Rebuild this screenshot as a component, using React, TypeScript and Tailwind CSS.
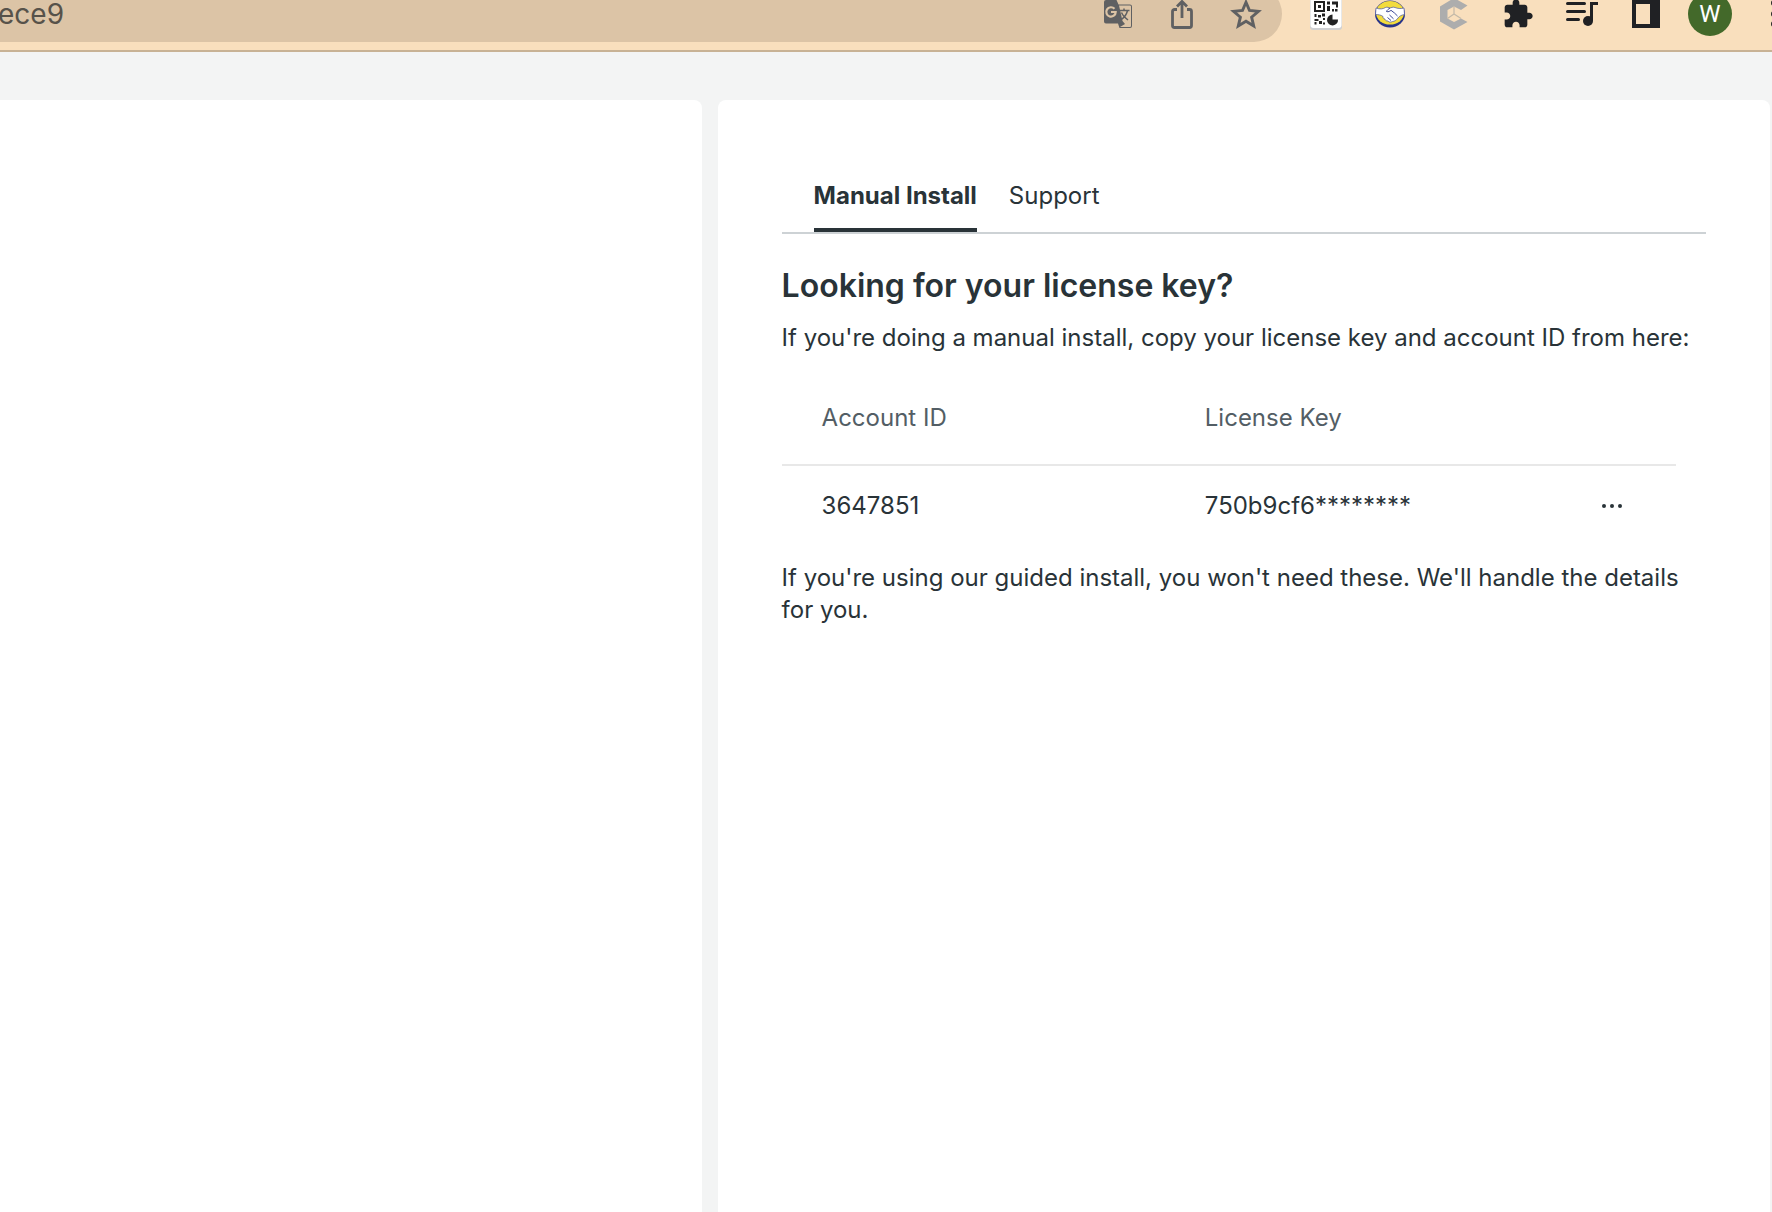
import type { ReactNode } from "react";

function ToolButton({ label, children }: { label: string; children: ReactNode }) {
  return (
    <button type="button" aria-label={label} className="flex h-14 w-16 shrink-0 items-center justify-center">
      {children}
    </button>
  );
}

function Glyph({ children, className }: { children: ReactNode; className?: string }) {
  return (
    <svg viewBox="0 0 32 32" aria-hidden="true" className={className ? "size-8 " + className : "size-8"}>
      {children}
    </svg>
  );
}

function TranslateIcon() {
  return (
    <Glyph>
      <path d="M4 2h10.5l2 4.5H28a2 2 0 0 1 2 2V28a2 2 0 0 1-2 2H17.5L16 25.5H4a2 2 0 0 1-2-2V4a2 2 0 0 1 2-2Z" fill="#5f6062" />
      <path d="M17 7.5h11a1 1 0 0 1 1 1V28a1 1 0 0 1-1 1H18l5-3-2.5-3Z" fill="#dcc4a6" />
      <path d="M12.500 10.800A4.700 4.700 0 1 0 13.700 14H9" fill="none" stroke="#dcc4a6" strokeWidth="2.200" />
      <path d="M17.5 12.5h10M22 10.5v2M25.5 12.5c-.8 4-3.5 7-6 9M19.5 14.5c1 2.5 4 5.500 6.500 7.500" fill="none" stroke="#5f6062" strokeWidth="1.5" />
    </Glyph>
  );
}

function ShareIcon() {
  return (
    <Glyph>
      <g fill="none" stroke="#5f6062" strokeWidth="2.8">
        <path d="M11 11.500H8.500a2 2 0 0 0-2 2V27.500a2 2 0 0 0 2 2h15a2 2 0 0 0 2-2V13.500a2 2 0 0 0-2-2H21" />
        <path d="M16 20V4M11 8.500l5-5 5 5" />
      </g>
    </Glyph>
  );
}

function StarIcon() {
  return (
    <Glyph>
      <path
        d="M16 4.300l3.500 8.200 8.900.8-6.800 5.900 2.100 8.800L16 23.300 8.300 28l2.100-8.800-6.800-5.900 8.900-.8Z"
        fill="none"
        stroke="#5f6062"
        strokeWidth="2.9"
      />
    </Glyph>
  );
}

function QrIcon() {
  return (
    <Glyph>
      <rect x="0" y="0" width="32" height="32" rx="3" fill="#cfd0d2" />
      <rect x="0.500" y="-2" width="31" height="32" rx="3" fill="#fff" />
      <g fill="#222">
        <path d="M4 3h11v11H4ZM6 5v7h7V5Z" fillRule="evenodd" />
        <rect x="8" y="7" width="3" height="3" />
        <path d="M17 3.500h3v3h-3ZM17 8h3v5h-3ZM22 3.500h6v6h-2v-3h-4ZM22 11h2v2.500h-2ZM25 11h2.500v2.500H25Z" />
        <path d="M4.500 16h2v3h-2ZM8 17h3v2.500H8ZM12 15.500h3v3h-3ZM4.500 21h4v2h-4ZM9 23h3v3H9ZM4.500 24h2v2.500h-2ZM13 20h2v2h-2ZM13 24.500h2v2h-2Z" />
        <path d="M22.500 16.500v5h5.500a5.500 5.500 0 1 1-5.500-5Z" />
      </g>
    </Glyph>
  );
}

function HandshakeIcon() {
  return (
    <Glyph>
      <ellipse cx="16" cy="16" rx="15" ry="13.500" fill="#28348a" />
      <ellipse cx="16" cy="14.800" rx="14" ry="11.800" fill="#f3dc3c" />
      <path
        d="M2 10c4 1.500 7 1 9.500-.5 2-1 3.500.5 4.500.5s2.500-1.500 5-.5c2.500 1 5.500 1.500 9 .5l.5 6.500c-3 .5-5 1.500-6.500 3.500-1.500 2-3.500 3.500-5.500 3.500-2 1-3.500.8-4.500-.5-2 .2-3-1-3-2-1.500-.2-2.200-1-2-2.500C7 17 4.500 16.500 1.500 16.500Z"
        fill="#fff"
        stroke="#4a56a0"
        strokeWidth="0.700"
      />
      <path d="M16 10c-1.500 1-3 2-3.500 3.500 2 .8 3.500-.5 4.500-1.200 2.500 1.500 4.500 3.700 6.500 5.700M15.500 17l4 3.800M13.500 19.500l3.500 3" fill="none" stroke="#28348a" strokeWidth="0.900" />
    </Glyph>
  );
}

function HexIcon() {
  return (
    <Glyph>
      <path d="M16 0 29.500 7.500 23 12 16 8.500 9.500 12v8.500l6.500 3.500 7-3.500 6.500 3.500L16 31.500 2 23.500V8.500Z" fill="#adadad" />
      <path d="M16 8.500V16M9.500 20.500 16 16l7 4.500" fill="none" stroke="#c2b8a8" strokeWidth="1.200" />
    </Glyph>
  );
}

function PuzzleIcon() {
  return (
    <svg viewBox="0 0 24 24" aria-hidden="true" className="size-8 fill-[#202124]">
      <path d="M20.5 11H19V7c0-1.100-.9-2-2-2h-4V3.500C13 2.120 11.880 1 10.500 1S8 2.120 8 3.500V5H4c-1.100 0-1.990.9-1.990 2v3.800H3.500c1.490 0 2.700 1.210 2.700 2.700s-1.210 2.700-2.700 2.700H2V20c0 1.100.9 2 2 2h3.800v-1.500c0-1.490 1.210-2.700 2.700-2.700 1.490 0 2.700 1.210 2.700 2.700V22H17c1.100 0 2-.9 2-2v-4h1.500c1.380 0 2.500-1.120 2.500-2.500S21.880 11 20.500 11z" />
    </svg>
  );
}

function PlaylistIcon() {
  return (
    <Glyph>
      <path d="M1.500 5.500h17M1.500 13.500h17M1.500 21.500h11" stroke="#202124" strokeWidth="3" strokeLinecap="round" />
      <circle cx="22" cy="23" r="5" fill="#202124" />
      <path d="M25.500 23V5.500H32" fill="none" stroke="#202124" strokeWidth="3" />
    </Glyph>
  );
}

function SidePanelIcon() {
  return (
    <Glyph>
      <path d="M2 2h28v28H2ZM6 6v20h14V6Z" fillRule="evenodd" fill="#202124" />
    </Glyph>
  );
}

function BrowserBar() {
  return (
    <header className="flex h-[52px] items-start overflow-hidden border-b-2 border-[#c8b295] bg-[#f9dfbd]">
      <div className="-mt-3.5 flex h-14 min-w-0 flex-1 items-center rounded-r-full bg-[#dcc4a6] pr-1">
        <input
          type="text"
          aria-label="Address"
          defaultValue="ece9"
          className="-ml-0.5 h-10 min-w-0 flex-1 bg-transparent text-[28px] text-[#57524a] outline-none"
        />
        <ToolButton label="Translate this page"><TranslateIcon /></ToolButton>
        <ToolButton label="Share"><ShareIcon /></ToolButton>
        <ToolButton label="Bookmark"><StarIcon /></ToolButton>
      </div>
      <div className="-mt-3.5 -mr-[34px] ml-3 flex shrink-0">
        <ToolButton label="QR code"><QrIcon /></ToolButton>
        <ToolButton label="Marketplace"><HandshakeIcon /></ToolButton>
        <ToolButton label="Hexagon extension"><HexIcon /></ToolButton>
        <ToolButton label="Extensions"><PuzzleIcon /></ToolButton>
        <ToolButton label="Media controls"><PlaylistIcon /></ToolButton>
        <ToolButton label="Side panel"><SidePanelIcon /></ToolButton>
        <ToolButton label="Profile">
          <span className="flex size-11 items-center justify-center rounded-full bg-[#43692a] font-['Roboto',sans-serif] text-2xl text-white">
            W
          </span>
        </ToolButton>
        <ToolButton label="Menu">
          <Glyph className="fill-[#202124]">
            <circle cx="16" cy="5" r="3" />
            <circle cx="16" cy="16" r="3" />
            <circle cx="16" cy="26" r="3" />
          </Glyph>
        </ToolButton>
      </div>
    </header>
  );
}

function InstallPanel() {
  return (
    <section className="rounded-t-lg bg-white px-16 pt-16">
      <div role="tablist" className="flex gap-8 border-b-2 border-[#cdd2d5] px-8">
        <button type="button" role="tab" aria-selected="true" className="border-b-4 border-[#293338] pt-4 pb-4 font-bold">
          Manual Install
        </button>
        <button type="button" role="tab" aria-selected="false" className="border-b-4 border-transparent pt-4 pb-4">
          Support
        </button>
      </div>
      <h1 className="mt-8 text-[32px] leading-10 font-semibold">Looking for your license key?</h1>
      <p className="mt-4">If you're doing a manual install, copy your license key and account ID from here:</p>
      <div className="mt-4 pr-[30px]">
        <table className="w-full table-fixed border-separate border-spacing-0 text-left">
          <thead className="text-[#535e65]">
            <tr className="h-24">
              <th className="border-b-2 border-[#e8e8e8] px-10 pt-0.5 font-normal">Account ID</th>
              <th className="border-b-2 border-[#e8e8e8] px-10 pt-0.5 font-normal">License Key</th>
              <th className="w-32 border-b-2 border-[#e8e8e8]" aria-label="Actions" />
            </tr>
          </thead>
          <tbody>
            <tr className="h-20">
              <td className="px-10">3647851</td>
              <td className="px-10">750b9cf6********</td>
              <td className="w-32">
                <button type="button" aria-label="More actions" className="mx-auto flex size-8 items-center justify-center">
                  <svg viewBox="0 0 24 24" aria-hidden="true" className="size-6 fill-[#293338]">
                    <circle cx="4" cy="12" r="2" />
                    <circle cx="12" cy="12" r="2" />
                    <circle cx="20" cy="12" r="2" />
                  </svg>
                </button>
              </td>
            </tr>
          </tbody>
        </table>
      </div>
      <p className="mt-4">If you're using our guided install, you won't need these. We'll handle the details for you.</p>
    </section>
  );
}

export default function App() {
  return (
    <div className="flex min-h-screen flex-col bg-[#f3f4f4] font-['Inter',sans-serif] text-2xl leading-8 text-[#293338] [font-optical-sizing:none]">
      <BrowserBar />
      <main className="grid flex-1 grid-cols-[2fr_3fr] gap-4 pt-12 pr-0.5">
        <section aria-label="Instructions" className="rounded-tr-lg bg-white" />
        <InstallPanel />
      </main>
    </div>
  );
}
